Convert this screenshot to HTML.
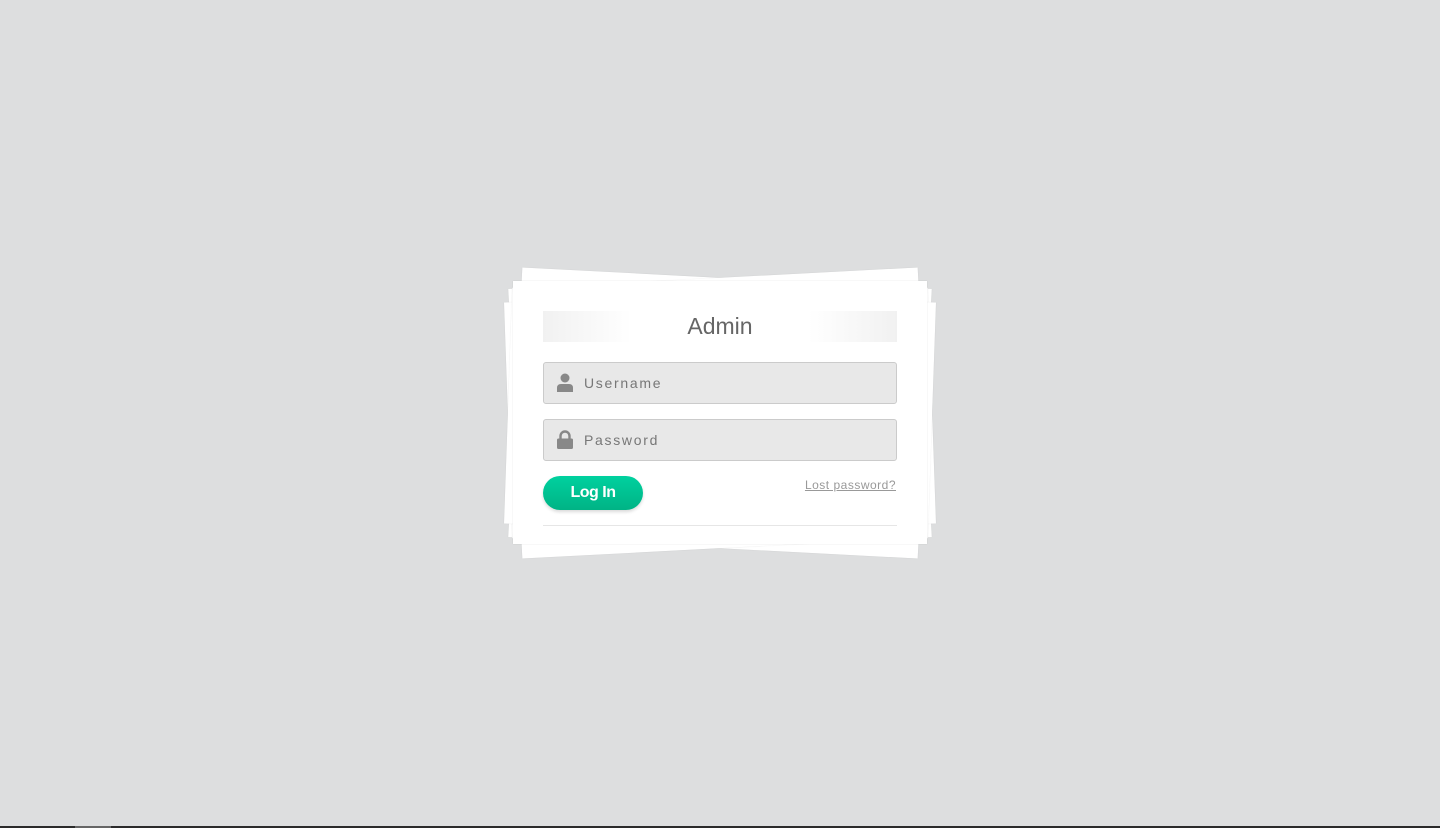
<!DOCTYPE html>
<html><head><meta charset="utf-8"><style>
html,body{margin:0;padding:0;width:1440px;height:828px;background:#dddedf;overflow:hidden;font-family:"Liberation Sans",sans-serif;position:relative}
.sheet{position:absolute;background:#fff;box-shadow:0 0 1px rgba(0,0,0,.12)}
.card{position:absolute;left:513px;top:281px;width:414px;height:263px;background:#fff;box-shadow:0 0 1px rgba(0,0,0,.15)}
.hdr{position:absolute;left:30px;top:30px;width:354px;height:31px;background:linear-gradient(90deg,#f1f1f1,#fff 25%,#fff 75%,#f1f1f1);text-align:center;font-size:23px;line-height:31px;color:#666}
.inp{position:absolute;left:30px;width:352px;height:40px;background:#e8e8e8;border:1px solid #cbcbcb;border-radius:3px}
.inp span{position:absolute;left:40px;top:0;line-height:40px;font-size:14px;letter-spacing:1.7px;color:#777}
.inp svg{position:absolute;left:13px;top:10px}
.btn{position:absolute;left:30px;top:195px;width:100px;height:34px;border-radius:17px;background:linear-gradient(#00d19f,#00b385);color:#fff;font-weight:bold;font-size:16px;line-height:34px;text-align:center;letter-spacing:-0.5px;box-shadow:0 2px 3px rgba(0,0,0,.15)}
.lost{position:absolute;right:31px;top:197px;font-size:12px;letter-spacing:0.5px;color:#999;text-decoration:underline}
.hr{position:absolute;left:30px;top:244px;width:354px;height:1px;background:#e6e6e6}
.bar{position:absolute;left:0;top:826px;width:1440px;height:2px;background:#2b2b2b}
.bar i{position:absolute;left:75px;width:36px;height:2px;background:#666}
</style></head><body>
<div class="sheet" style="left:515px;top:278px;width:410px;height:270px;transform:rotate(3deg)"></div>
<div class="sheet" style="left:515px;top:278px;width:410px;height:270px;transform:rotate(-3deg)"></div>
<div class="sheet" style="left:508px;top:295px;width:424px;height:236px;transform:rotate(-2deg)"></div>
<div class="sheet" style="left:508px;top:295px;width:424px;height:236px;transform:rotate(2deg)"></div>
<div class="card">
<div class="hdr">Admin</div>
<div class="inp" style="top:81px"><svg width="16" height="19" viewBox="0 0 16 19"><circle cx="8" cy="5" r="4.5" fill="#888"/><path d="M0 19V15Q0 11 4 11H12Q16 11 16 15V19Z" fill="#888"/></svg><span>Username</span></div>
<div class="inp" style="top:138px"><svg width="16" height="19" viewBox="0 0 16 19"><path d="M3.5 9V6a4.5 4.5 0 0 1 9 0v3" fill="none" stroke="#888" stroke-width="2.4"/><rect x="0" y="8.5" width="16" height="10.5" rx="1.5" fill="#888"/></svg><span>Password</span></div>
<div class="btn">Log In</div>
<div class="lost">Lost password?</div>
<div class="hr"></div>
</div>
<div class="bar"><i></i></div>
</body></html>
